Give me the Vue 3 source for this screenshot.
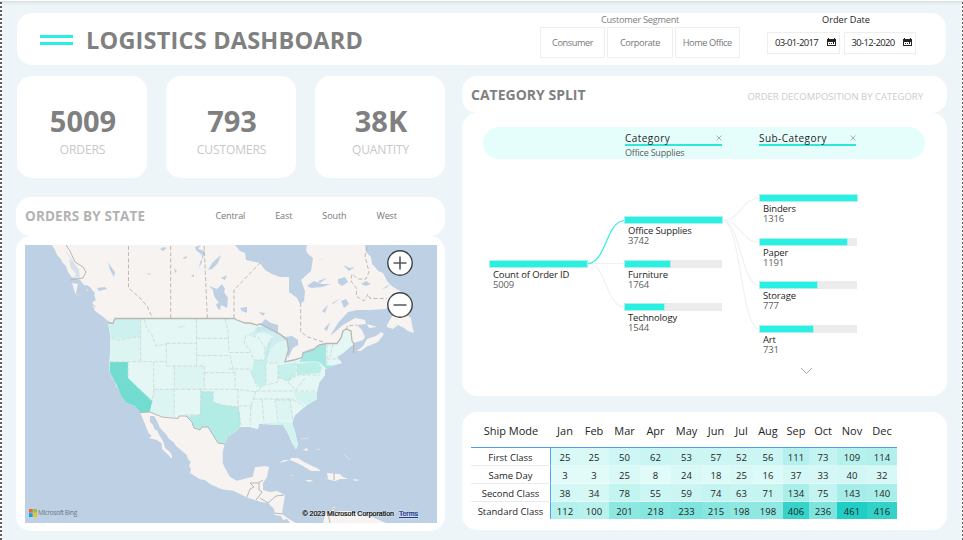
<script setup>
const kpis = [
  { value: '5009', label: 'ORDERS' },
  { value: '793', label: 'CUSTOMERS' },
  { value: '38K', label: 'QUANTITY' },
]
const segments = ['Consumer', 'Corporate', 'Home Office']
const dates = ['03-01-2017', '30-12-2020']
const regions = ['Central', 'East', 'South', 'West']

// Node positions on the decomposition canvas, measured from the panel corner.
const nodes = [
  { name: 'Count of Order ID', value: 5009, x: 27, y: 147, fill: 99 },
  { name: 'Office Supplies', value: 3742, x: 162, y: 103, fill: 99 },
  { name: 'Furniture', value: 1764, x: 162, y: 147, fill: 47 },
  { name: 'Technology', value: 1544, x: 162, y: 190, fill: 41 },
  { name: 'Binders', value: 1316, x: 297, y: 81, fill: 98.5 },
  { name: 'Paper', value: 1191, x: 297, y: 125, fill: 89 },
  { name: 'Storage', value: 777, x: 297, y: 168, fill: 59 },
  { name: 'Art', value: 731, x: 297, y: 212, fill: 55 },
]

const months = ['Jan', 'Feb', 'Mar', 'Apr', 'May', 'Jun', 'Jul', 'Aug', 'Sep', 'Oct', 'Nov', 'Dec']
const rows = [
  { mode: 'First Class', v: [25, 25, 50, 62, 53, 57, 52, 56, 111, 73, 109, 114] },
  { mode: 'Same Day', v: [3, 3, 25, 8, 24, 18, 25, 16, 37, 33, 40, 32] },
  { mode: 'Second Class', v: [38, 34, 78, 55, 59, 74, 63, 71, 134, 75, 143, 140] },
  { mode: 'Standard Class', v: [112, 100, 201, 218, 233, 215, 198, 198, 406, 236, 461, 416] },
]
const low = [226, 251, 249]
const high = [31, 206, 196]
function heat(n) {
  const t = (n - 3) / 458
  return `rgb(${low.map((c, i) => Math.round(c + (high[i] - c) * t)).join(',')})`
}
</script>

<template>
  <div class="page">
    <header class="card top">
      <div class="burger"><i></i><i></i></div>
      <h1>LOGISTICS DASHBOARD</h1>
      <div class="slicer segment">
        <div class="cap">Customer Segment</div>
        <div class="buttons"><div v-for="s in segments" :key="s" class="btn"><span>{{ s }}</span></div></div>
      </div>
      <div class="slicer range">
        <div class="cap dark">Order Date</div>
        <div class="buttons dates">
          <div v-for="d in dates" :key="d" class="date">
            <span>{{ d }}</span>
            <svg width="9" height="9" viewBox="0 0 9 9"><path fill="#252423" fill-rule="evenodd" d="M0 1h1V0h1v1h5V0h1v1h1v7H0zM1 4v3h7V4zM2 5h1v1H2zM4 5h1v1H4zM6 4h1v2H6z" /></svg>
          </div>
        </div>
      </div>
    </header>

    <main>
      <div class="left">
        <section class="kpis">
          <div v-for="k in kpis" :key="k.label" class="card kpi">
            <b>{{ k.value }}</b><span>{{ k.label }}</span>
          </div>
        </section>
        <section class="card maphead">
          <h2>ORDERS BY STATE</h2>
          <nav><span v-for="r in regions" :key="r">{{ r }}</span></nav>
        </section>
        <section class="card mapcard">
          <div class="map">
            <svg class="geo" width="412" height="278" viewBox="25 245 412 278">
              <rect x="25" y="245" width="412" height="278" fill="#bed0e4" />
              <g fill="#f7f3f1">
                <path d="M51.7 245L55 250 57 255 60 258 63 263 66 266 68 272 71.7 277 76 278 80 280 84 285 86 286 87 291 91 289 95 293 93 297 95 300 92 303 96 307 94 310 99 314 105 317 110 321 108.3 323 109.3 330 111 340 110 350 110 361.7 109.3 371.7 112 377 115 381.7 116 386 119.3 390 121 396 126 402.7 131 403 135 406 140 412.3 143.3 420 146 426.7 148.3 432.7 151.7 436 149 438 156.7 440 161.7 443.3 162 449 168.3 455 171.7 458.7 172 456 170 452 165 448 163.3 441.7 159.3 435 157 430 155 430 153 425 150 421.7 150 416 154 416 157.3 421.7 160 428 166.7 435 169 439 173.3 441.7 176 446 180 449.3 186.7 455 188 459 190.7 462 189 466 191 469 190 473 200 479.3 205 480 210 484 221.7 489.3 233 490.7 246.7 497.3 260 501.7 268.3 503.3 274 509 275 515 281 516 283 520 287 519 290 523H296L289 519 282 514 283 507 285 495 277 491 270 492 263 490 263 483 267 477 269 467 265 466 255 467.3 252.7 476.7 237 480.7 230 477 225 468 222.7 463 222.7 452 225 443 227 437 235 432 240 427 250 427 258 429 259 424 273 423 283 425 288 433 292 443 296 449 298 445 295 432 292 423 295 415 307 405 317 399 317 392 319 383 325 375 325 369 331 366 342 363 337 357 343 353 354 343 363 340 365 337 362 330 357 325 366 324 365 320 355 318 343 325 330 336 338 323 348 312 357 310 370 310 385 309 402 305 405 295 400 291 393 287 387 281 383 273 378 271 375 267 372 264 371 257 366 252 365 245Z" />
                <path d="M357 351L363 346 367 339 376 336 381 332 384 334 378 342 366 347 361 351ZM367 324L374 326 377 327 369 328ZM387 325L391 318 396 311 403 312 411 318 412 325 414 333 408 331 404 328 398 325 393 329 387 327Z" />
                <path d="M279 463L284 460 290 460 291 458 298 458 304 462 310 465 317 468 321 471 311 471 303 466 297 463 290 460 283 462ZM305 480L311 480 313 481 309 482ZM322 478L328 479 327 473 340 474 343 477 348 479 340 479 335 481ZM353 479L360 480 355 481ZM303 450L307 448 308 451ZM323 523L325 515 329 511 335 506 333 513 340 511 352 511 365 516 372 517 386 523Z" />
                <path d="M72 283L78 284 76 293 80 297 75 293ZM92 306L98 308 105 313 113 320 108 321 102 316Z" />
              </g>
              <path d="M344 454L350 460M316 449L320 450M301 439L309 438M291 475L294 476" fill="none" stroke="#dfe1e4" stroke-width="1" />
              <g fill="#bed0e4">
                <path d="M235 245L240 251 245 253 246 260 260 263 265 270 272 274 280 277 289 277 289 292 297 298 300 304 304 301 305 291 301 280 311 271 313 258 308 254 306 250 307 245Z" />
                <path d="M209 286L213 290 214 296 219 303 216 304 218 309 220 310 221 305 227 308 228 298 224 292 225 289 222 284 217 289ZM195 247L201 245 198 249 205 251 203 258 200 262 199 268 202 262 202 255 196 250ZM108 262L111 267 115 272 114 277 110 270ZM182 258L187 256 186 259ZM145 273L151 274 150 275ZM160 249L164 247 167 248 163 251ZM174 268L177 271 175 273ZM191 276L194 274 194 277ZM208 270L213 262 221 255 218 263 212 269ZM221 278L227 275 225 280Z" />
                <path d="M240 308L247 307 247 313 242 311ZM259 312L265 313 263 316ZM307 286L314 281 322 284 331 284 322 287 311 288ZM317 261L326 257 320 260ZM338 279L345 277 348 282 342 286 338 283ZM361 284L366 281 371 284 366 286ZM322 311L328 305 325 313ZM324 329L330 322 327 331ZM341 301L346 299 349 304 344 308ZM382 289L392 283 386 288ZM318 281L327 278 320 283ZM97 288L105 287 107 289 99 291ZM332 303L341 298 333 304ZM343 265L350 268 355 267 349 271ZM297 267L304 266 302 269Z" />
                <path d="M64 248L67 253 72 261 69 260 71 268 76 274 74 277 80 278 79 270 74 263 70 256Z" opacity=".55" />
                <path d="M258 324L262 323 265 319 271 323 278 325 278 332 283 335 274 332 267 328ZM280 334L286 337 292 336 298 340 298 345 293 348 290 354 288 358 288 346 286 340ZM302 355L303 352 313 348 314 350ZM287 361L302 357 290 363ZM84 286L88 290 86 294 90 292 91 298 96 301 94 294 91 288 87 285Z" />
              </g>
              <path fill="#e5f7f4" d="M110 319H234L244 323 257 325 260 324 268 328 281 335 287 340 288 350 286 362 294 359 302 357 303 353 313 350 319 345 326 343.5H337L343 331 346 329 351 331 352 340 354 344 343 353 337 357 342 363 331 366 325 369 325 375 319 383 317 392 317 399 307 405 295 415 292 423 295 432 298 445 296 449 292 443 288 433 283 425 273 423 259 424 258 429 250 427H240L235 432 227 437 225 444 218 443 208 427H202L200 430 193 427 191 421 186 416H178V418L162 416 150 412 140 412 135 406 126 403 119 390 115 382 109 372 110 350 111 340 108 323Z" />
              <path fill="#d0eeef" d="M249 334L253 332 257 327 264 326 272 331 281 335 287 341 276 338 266 333 258 333 255 336ZM269 341L276 337 287 341 277 343 270 350 268 358 268 363 265 362 265 351ZM177 327L186 325 184 327 179 328ZM157 363L162 369 159 367Z" />
              <path fill="#c6e7ee" d="M257 327L266 327 273 332 263 330 256 333ZM268 343L272 341 269 348 268 357 266 357ZM269 339L276 337 272 341Z" />
              <path fill="#cdf1ee" d="M115 319H140.7V336.700L129 338 117 340 111 337 108 323 115 323Z" />
              <path fill="#72dcd1" d="M110 362H128V378L152.500 401 150 411.700 140 412.300 135 406 126 402.700 121 396 119 390 115 382 109.500 372Z" />
              <path fill="#b3ebe5" d="M200.700 391.700H213V402L222 405 230 406 238 407 240 414 240 427 235 432 227 437 225 444 218 443 213 435 208 427H202L200 430 193 427 191.700 421 185.700 416 200 415Z" />
              <path fill="#a5e8e2" d="M299 362L302 358 303 353 313 350 318 345 326 343.500V357L326 365 335 366 327 369 318 361Z" />
              <path fill="#bceee8" d="M297 364L318 361 322 368 320 373 297 375Z" />
              <path fill="#c6f0ec" d="M254 360H265L266 363 266 383 260 388 256 383 251 374ZM278 365L286 364 296 362 296 375 288 381 278 377Z" />
              <path fill="#d2f3ef" d="M260 424L273 423 285 422 292 423 295 432 298 445 296 449 292 443 288 433 283 425 273 425ZM293 392H317V399L307 405 297 400Z" />
              <path fill="#dcf5f2" d="M154 389H174V417L162 416 150 412 152 403ZM174 366H204V389H174ZM278 343L286 342 288 350 284 363 269 363 270 350ZM276 400H290L293 420 279 421ZM110 338L129 338 141 337V361H110Z" />
              <g fill="none" stroke="#c8d8d5" stroke-width=".8" stroke-dasharray="4 1.5">
                <path d="M110 361.700H166.300M140.700 319V361M144 319L147 329 152 335 156 346 166 344M166.300 343.300H196.500M166.300 343V366M166.300 366H204.500M196.500 319V366M196.500 338.300H228M196.500 355.600H230L234 372M153.700 362V392L152 402M174.300 366V417M153.700 389.300H238M204.300 366V389M204.300 372.700H235M200.700 389V415M185 415H200.700M200.700 391.700H213.300V402L222 405 238 407M225 319L228 330 229 352M111 338L118 340 129 338 140.700 337M128 362V378L152 402" />
                <path d="M229 352.500H251M229 369H250L257 387M235 372V389L256 392M238 406H253M238 389V407L241 425M256 391H317M253 399H293M262 399L264 422M275 399L278 422M290 399L293 421M266 362V384L257 391M269 363H278V382L267 385M278 377L288 381 297 375M297 363V375H320M288 382L296 390 305 378M276 400H294L304 406M256 391L251 406 250 425M246 335L244 343 250 350 254 360H265V348L259 338 249 335M327 344V365M327 359H339M333 344L330 357M288 381L292 374" />
              </g>
              <g fill="none" stroke="#b9b3af" stroke-width=".9" stroke-dasharray="4 2.2">
                <path d="M128.500 246V288L139 297 147 306 152.500 318M170.700 246V318M204.200 246L207.300 318M234 318V290L260 263M300.700 303V332L308 337 323 342M367 247L365 256 369 272 366 279 358 279 352 274 351 281 357 289 356 296 364 301 368 294 370 298.500H387M347 330L347 326 357 325" />
              </g>
              <g fill="none" stroke="#b9b6b4" stroke-width="1.3">
                <path d="M108 322.500L113 323.500 115 318.500H234L237 320 245 323 250 323 257 325 260 324 268 328 281 335 287 340 288.500 350 285 362 294 360 302 357.500 303 353 313 350 319 345 326 343.500H337L341 338 343 331 346 329 351 331 352 341 354 344 353.500 353" />
                <path d="M66 245L70 251 75 262 83 267 86 272 83 278 70 280M140 412.500L150 412 162 417 178 418.500 179 416H186L192 422 194 428 200 430 202 427H208L213 435 218 443 225 444M247 497L250 489 254 487 250 483H258L263 480M259 483V490L262 492 256 500M260 498L268 503 276 496 284 495M334 473V480M275 513L282 514M334 508L328 512 329 518 330 523" stroke-width="1" />
              </g>
              <g fill="#fff" stroke="#3d4147" stroke-width="1.4"><circle cx="400" cy="263" r="12.200" /><circle cx="400" cy="305" r="12.200" /></g>
              <path d="M393.500 263H406.500M400 256.500V269.500M393.500 305H406.500" stroke="#55585c" stroke-width="1.6" />
            </svg>
            <div class="bing">
              <svg width="8" height="8" viewBox="0 0 8 8"><path fill="#f1652a" d="M0 0h3.700v3.700H0z" /><path fill="#8cc34b" d="M4.200 0H8v3.700H4.200z" /><path fill="#05a6f0" d="M0 4.200h3.700V8H0z" /><path fill="#fdbc12" d="M4.200 4.200H8V8H4.200z" /></svg>
              <span>Microsoft Bing</span>
            </div>
            <div class="copy"><span>© 2023 Microsoft Corporation</span><a>Terms</a></div>
          </div>
        </section>
      </div>

      <div class="right">
        <section class="card splithead">
          <h2>CATEGORY SPLIT</h2>
          <span>ORDER DECOMPOSITION BY CATEGORY</span>
        </section>
        <section class="card tree">
          <div class="band">
            <div class="level">
              <div class="lname"><span>Category</span><svg width="6" height="6" viewBox="0 0 6 6"><path d="M.5 .5L5.5 5.5M5.5 .5L.5 5.5" stroke="#8ba5a3" stroke-width=".8" /></svg></div>
              <div class="chosen">Office Supplies</div>
            </div>
            <div class="level">
              <div class="lname"><span>Sub-Category</span><svg width="6" height="6" viewBox="0 0 6 6"><path d="M.5 .5L5.5 5.5M5.5 .5L.5 5.5" stroke="#8ba5a3" stroke-width=".8" /></svg></div>
            </div>
          </div>
          <svg class="links" width="485" height="283" viewBox="462 113 485 283" fill="none">
            <g stroke="#f1f1f1" stroke-width="1.2">
              <path d="M588 263.500H625M588 263.500C606 263.500 606 307 625 307M722 220.500C741 220.500 741 198.500 759 198.500M722 220.500C741 220.500 741 242 759 242M722 220.500C741 220.500 741 285.500 759 285.500M722 220.500C741 220.500 741 329 759 329" />
            </g>
            <path stroke="#2af0e3" stroke-width="1.2" d="M588 263.500C606 263.500 606 220.500 625 220.500" />
            <path stroke="#aaa" d="M801 368L806.500 373.500L812 368" />
          </svg>
          <div v-for="n in nodes" :key="n.name" class="node" :style="{ left: n.x + 'px', top: n.y + 'px' }">
            <div class="bar"><i :style="{ width: n.fill + 'px' }"></i></div>
            <div class="nname">{{ n.name }}</div>
            <div class="nval">{{ n.value }}</div>
          </div>
        </section>
        <section class="card matrix">
          <div class="grid head"><span>Ship Mode</span><span v-for="m in months" :key="m">{{ m }}</span></div>
          <div v-for="r in rows" :key="r.mode" class="grid row">
            <span class="mode">{{ r.mode }}</span>
            <span v-for="(n, i) in r.v" :key="i" class="cell" :style="{ background: heat(n) }">{{ n }}</span>
          </div>
        </section>
      </div>
    </main>
  </div>
</template>

<style>
body { margin: 0; overflow: hidden; }
</style>

<style scoped>
* { box-sizing: border-box; }
.page {
  width: 963px; height: 540px; padding: 12px 16px 0 17px; position: relative;
  background: linear-gradient(#fff 0 1px, #d9dfe0 1px 2px, #e4ebed 2px 3px, #edf5f9 5px);
  font-family: "Open Sans", "Noto Sans", sans-serif; color: #252423; white-space: nowrap;
}
.page::before, .page::after {
  content: ""; position: absolute; top: 2px; bottom: 0; width: 2px;
  background: repeating-linear-gradient(#605e5c 0 2px, #fff 2px 4px);
}
.page::before { left: 0; }
.page::after { right: 0; width: 1px; }
.card { background: #fff; border-radius: 15px; }
h1, h2 { margin: 0; font-weight: 700; color: #808080; }

.top { width: 929px; height: 52px; margin-top: 1px; display: flex; align-items: flex-start; padding-left: 23px; }
.burger { display: flex; flex-direction: column; gap: 4px; width: 33px; margin: 22px 13px 0 0; }
.burger i { height: 3px; background: #2af0e3; }
h1 { width: 454px; font-size: 23.500px; line-height: 52px; letter-spacing: .2px; padding-top: 1px; }
.slicer { width: 200px; }
.cap { font-size: 9.200px; line-height: 14px; letter-spacing: -.25px; color: #808080; text-align: center; }
.cap.dark { color: #252423; letter-spacing: 0; }
.buttons { display: flex; gap: 2px; }
.segment .btn { width: 65.300px; height: 31px; border: 1px solid #eee; font-size: 9.200px; letter-spacing: -.4px; color: #777; display: flex; align-items: center; justify-content: center; }
.range { width: 149px; margin-left: 27px; }
.range .cap { padding-left: 9px; }
.dates { gap: 4px; padding-top: 5px; }
.date { width: 72.500px; height: 22px; border: 1px solid #eee; display: flex; align-items: center; justify-content: space-between; padding: 0 3px 2px 7px; font-size: 9.500px; letter-spacing: -.65px; }

main { display: flex; gap: 16px; margin-top: 11px; }
.left { width: 429px; }
.right { width: 485px; }
.kpis { display: flex; gap: 19px; width: 428px; }
.kpi { width: 130px; height: 102px; display: flex; flex-direction: column; align-items: center; padding-top: 27px; }
.kpi b { font-size: 29px; line-height: 36px; color: #808080; padding-left: 2px; }
.kpi span { font-size: 12px; line-height: 21px; letter-spacing: -.1px; color: #c8c8c8; padding-left: 1px; }
.maphead { height: 39px; margin: 19px 1px 0 -1px; display: flex; align-items: center; padding: 0 0 2px 9px; }
.maphead h2 { font-size: 13.500px; letter-spacing: .15px; color: #b3b3b3; width: 190.500px; }
nav { display: flex; gap: 30px; font-size: 9px; letter-spacing: -.1px; color: #777; }
.mapcard { height: 295px; margin: 0 1px 0 -1px; padding: 9px; }
.map { position: relative; width: 412px; height: 278px; overflow: hidden; }
.geo { display: block; }
.bing { position: absolute; left: 4px; bottom: 6px; display: flex; align-items: center; gap: 1px; font-size: 6.500px; letter-spacing: -.35px; line-height: 8px; color: #6d7884; }
.copy { position: absolute; right: 19px; bottom: 4px; display: flex; gap: 5px; font: 7px/11px "Liberation Sans", sans-serif; color: #000; -webkit-text-stroke: .2px currentColor; text-shadow: 0 0 1px #fff, 0 0 2px #fff; }
.copy a { color: #1f3a93; text-decoration: underline; }

.splithead { height: 36.500px; display: flex; align-items: center; justify-content: space-between; padding: 1px 24px 0 9px; }
.splithead h2 { font-size: 14px; }
.splithead span { font-size: 9.500px; color: #ccc; padding-top: 4px; }
.tree { position: relative; height: 283px; margin-top: .5px; padding: 14px 21px; }
.band { height: 32px; width: 442px; border-radius: 16px; background: #e6fefb; display: flex; gap: 37px; padding: 3px 0 0 142px; }
.level { width: 97px; }
.lname { display: flex; align-items: center; justify-content: space-between; height: 16px; padding-top: 1px; border-bottom: 2px solid #2fe6dc; font-size: 10px; letter-spacing: .45px; }
.chosen { font-size: 9px; line-height: 13px; letter-spacing: -.2px; color: #605e5c; }
.links { position: absolute; left: 0; top: 0; }
.node { position: absolute; width: 98px; }
.bar { height: 8px; background: #ececec; }
.bar i { display: block; height: 100%; background: #2af0e3; border: .5px solid #aef0ea; }
.nname { font-size: 9.500px; line-height: 11px; letter-spacing: -.15px; padding: 1px 0 0 4px; }
.nval { font-size: 9.500px; line-height: 9px; letter-spacing: -.15px; padding-left: 4px; color: #605e5c; }

.matrix { height: 118px; margin-top: 16px; padding: 4px 0 0 9px; }
.grid { display: grid; grid-template-columns: 80px 28px 30px 31px 31px 31px 28px 23px 30px 26px 28px 30px 30px; width: 426px; text-align: center; }
.head { height: 32px; line-height: 30px; font-size: 11px; border-bottom: 1px solid #4f9cf0; }
.row { height: 18px; line-height: 19px; font-size: 9.500px; overflow: hidden; }
.mode { height: 18px; border-right: 1px solid #5ba3f0; border-bottom: 1px solid #ebebeb; }
.row:last-child { height: 17px; }
.row:last-child .mode { border-bottom: 0; }
.cell { height: 18px; border-bottom: 1px solid rgba(255, 255, 255, .4); }
</style>
